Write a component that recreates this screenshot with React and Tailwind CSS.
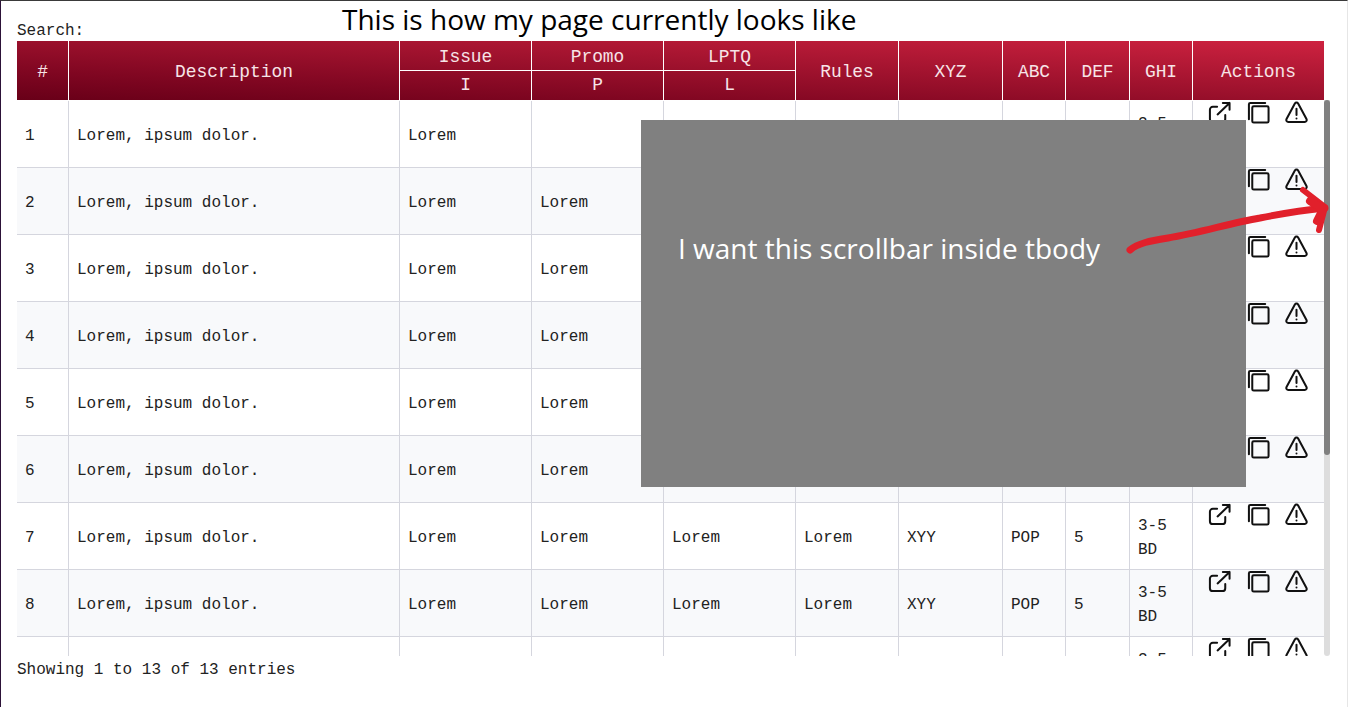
import React from 'react'

const mono = "font-['Liberation_Mono','DejaVu_Sans_Mono',monospace]"

const rows = Array.from({ length: 13 }, (_, i) => i + 1)

function Cols() {
  return (
    <colgroup>
      <col className="w-[52px]" />
      <col className="w-[331px]" />
      <col className="w-[132px]" />
      <col className="w-[132px]" />
      <col className="w-[132px]" />
      <col className="w-[103px]" />
      <col className="w-[104px]" />
      <col className="w-[63px]" />
      <col className="w-[64px]" />
      <col className="w-[63px]" />
      <col className="w-[131px]" />
    </colgroup>
  )
}

function ExternalIcon() {
  return (
    <svg viewBox="0 0 24 24" className="w-[23px] h-[23px]" fill="none" stroke="#111" strokeWidth="2.1" strokeLinecap="round" strokeLinejoin="round">
      <path d="M9.5 6H5a3 3 0 0 0-3 3v10a3 3 0 0 0 3 3h10a3 3 0 0 0 3-3v-4.5" />
      <path d="M10 14 22.5 2M15.5 2h7v7" />
    </svg>
  )
}

function CopyIcon() {
  return (
    <svg viewBox="0 0 24 24" className="w-[23px] h-[23px]" fill="none" stroke="#111" strokeWidth="2.1" strokeLinejoin="round">
      <rect x="5.5" y="5.5" width="17" height="17" rx="1.5" />
      <path d="M2 19V3.5A1.5 1.5 0 0 1 3.5 2H19" strokeLinecap="round" />
    </svg>
  )
}

function AlertIcon() {
  return (
    <svg viewBox="0 0 24 24" className="w-[23px] h-[23px]" fill="none" stroke="#111" strokeWidth="2.1" strokeLinecap="round" strokeLinejoin="round">
      <path d="M10.3 2.6 1.6 18.8A2.2 2.2 0 0 0 3.5 22h17a2.2 2.2 0 0 0 1.9-3.2L13.7 2.6a2 2 0 0 0-3.4 0z" />
      <path d="M12 8v6.5" />
      <path d="M12 18.2v.1" />
    </svg>
  )
}

function HeaderTable() {
  const th = 'border-r border-white font-normal text-center align-middle pt-[5px] text-[17.9px] leading-none text-[#f7e4e7]'
  const top = 'border-r border-b border-white font-normal text-center align-middle pt-[5px] text-[17.9px] leading-none text-[#f7e4e7] h-[30px]'
  const sub = 'border-r border-white font-normal text-center align-middle pt-[1px] text-[17.9px] leading-none text-[#f7e4e7] h-[29px]'
  return (
    <table className="w-[1307px] table-fixed border-separate border-spacing-0">
      <Cols />
      <thead className="bg-linear-to-tr from-[#680018] to-[#ce2240]">
        <tr>
          <th rowSpan="2" className={th}>#</th>
          <th rowSpan="2" className={th}>Description</th>
          <th className={top}>Issue</th>
          <th className={top}>Promo</th>
          <th className={top}>LPTQ</th>
          <th rowSpan="2" className={th}>Rules</th>
          <th rowSpan="2" className={th}>XYZ</th>
          <th rowSpan="2" className={th}>ABC</th>
          <th rowSpan="2" className={th}>DEF</th>
          <th rowSpan="2" className={th}>GHI</th>
          <th rowSpan="2" className="font-normal text-center align-middle pt-[5px] text-[17.9px] leading-none text-[#f7e4e7]">Actions</th>
        </tr>
        <tr>
          <th className={sub}>I</th>
          <th className={sub}>P</th>
          <th className={sub}>L</th>
        </tr>
      </thead>
    </table>
  )
}

function BodyRow({ n }) {
  const td = 'border-r border-b border-[#d5d6de] pl-2 pr-2 pt-[4px] align-middle'
  return (
    <tr className={n % 2 === 0 ? 'bg-[#f8f9fb] h-[67px]' : 'bg-white h-[67px]'}>
      <td className={td}>{n}</td>
      <td className={td}>Lorem, ipsum dolor.</td>
      <td className={td}>Lorem</td>
      <td className={td}>{n === 1 ? '' : 'Lorem'}</td>
      <td className={td}>Lorem</td>
      <td className={td}>Lorem</td>
      <td className={td}>XYY</td>
      <td className={td}>POP</td>
      <td className={td}>5</td>
      <td className={td}>3-5 BD</td>
      <td className="border-b border-[#d5d6de] align-top pl-[15px]">
        <div className="flex gap-[15.5px]">
          <ExternalIcon />
          <CopyIcon />
          <AlertIcon />
        </div>
      </td>
    </tr>
  )
}

export default function App() {
  return (
    <div className={`relative h-[707px] overflow-hidden bg-white border-t border-t-[#3a3a3a] border-l border-l-[#2c1238] border-r border-r-[#e6e6e6] text-[16px] leading-[24px] text-[#222] ${mono}`}>
      <div className="pl-[16px] pt-[20px]">
        <div className="h-[20px] leading-[20px]">Search:</div>

        <HeaderTable />
        <div className="flex h-[556px] w-[1313px]">
          <div className="w-[1307px] overflow-hidden">
            <table className="mt-px w-[1307px] table-fixed border-separate border-spacing-0">
              <Cols />
              <tbody>
                {rows.map((n) => (
                  <BodyRow key={n} n={n} />
                ))}
              </tbody>
            </table>
          </div>
          {/* scrollbar beside the body rows */}
          <div className="w-[6px] rounded-b-[3px] bg-[#dddddd]">
            <div className="h-[355px] w-[6px] rounded-[3px] bg-[#808080]"></div>
          </div>
        </div>

        <div className="mt-[2px] h-[24px]">Showing 1 to 13 of 13 entries</div>
      </div>

      {/* annotations pasted on top of the screenshot */}
      <div className="absolute left-[341px] top-[-1px] text-[28px] leading-[38px] text-black font-['Open_Sans',sans-serif]">
        This is how my page currently looks like
      </div>
      <div className="absolute left-[640px] top-[119px] w-[605px] h-[367px] bg-[#808080]">
        <div className="pl-[37px] pt-[110px] text-[28px] leading-[36px] text-white font-['Open_Sans',sans-serif]">
          I want this scrollbar inside tbody
        </div>
      </div>
      <svg className="absolute left-[1119px] top-[180px]" width="220" height="80" viewBox="0 0 220 80" fill="none" stroke="#e1202b" strokeLinecap="round" strokeLinejoin="round">
        <path d="M10 69C18 62 30 60 48 57C80 52 110 42 140 37C165 32 185 29 205 27" strokeWidth="7" />
        <path d="M183 9L205 26L199 49" strokeWidth="6" />
        <path d="M190 20L203 28L197 40" strokeWidth="8" />
      </svg>
    </div>
  )
}
